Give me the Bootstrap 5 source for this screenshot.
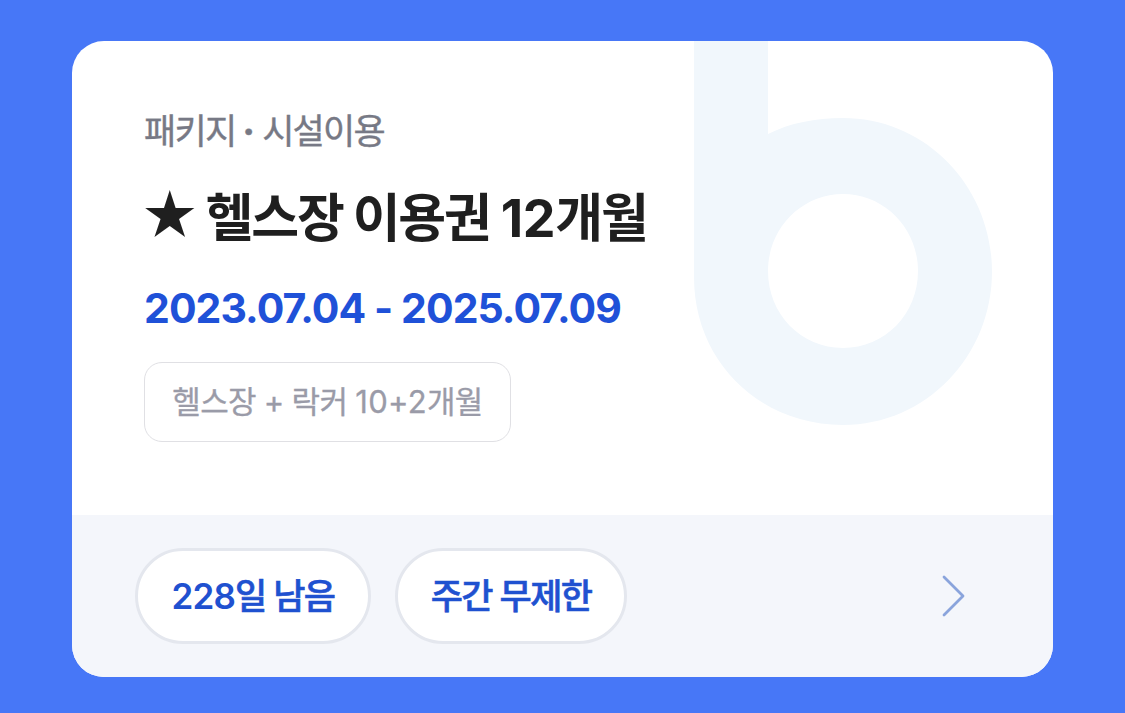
<!DOCTYPE html>
<html lang="ko">
<head>
    <meta charset="UTF-8">
    <meta name="viewport" content="width=device-width, initial-scale=1.0">
    <title>헬스장 이용권</title>
    <link href="https://cdn.jsdelivr.net/npm/bootstrap@5.3.5/dist/css/bootstrap.min.css" rel="stylesheet">
    <style>
        body {
            background: #4777f7;
            font-family: Inter, "Noto Sans CJK KR", sans-serif;
            padding: 41px 72px 36px;
            overflow: hidden;
        }
        .pass {
            height: 636px;
            border-radius: 32px;
        }
        .pass-body {
            height: 474px;
            padding: 65px 72px 0;
        }
        .pass-logo {
            top: 0;
            left: 622px;
        }
        .pass-type {
            font-size: 35px;
            line-height: 50px;
            letter-spacing: -1.75px;
            color: #777985;
            -webkit-text-stroke: .4px;
        }
        .type-dot {
            font-weight: 800;
            margin: 0 1px 0 -1px;
        }
        .pass-title {
            font-size: 52px;
            line-height: 76px;
            letter-spacing: -2.2px;
            margin-top: 25px;
            color: #1f1f1f;
        }
        .title-star {
            font-size: 57px;
            line-height: 1;
            letter-spacing: 0;
            margin: 0 -4px 0 -4px;
        }
        .title-num {
            letter-spacing: -.3px;
            margin-left: 1px;
        }
        .pass-date {
            font-size: 41px;
            line-height: 60px;
            letter-spacing: -.95px;
            margin-top: 21px;
            color: #1f51d8;
        }
        .pass-option {
            width: 367px;
            height: 80px;
            margin-top: 24px;
            border: 1px solid #e0e0e4;
            border-radius: 18px;
            font-size: 31px;
            letter-spacing: -.7px;
            padding-top: 1px;
            color: #9a9ba8;
            -webkit-text-stroke: .3px;
        }
        .option-num { letter-spacing: .3px; }
        .pass-footer {
            height: 162px;
            padding: 0 88px 0 63px;
            background: #f4f6fb;
        }
        .pass-pill {
            height: 96px;
            border: 3px solid #e4e7ee;
            font-size: 35px;
            letter-spacing: -1.6px;
            color: #1f51d0;
            -webkit-text-stroke: .6px;
        }
        .pill-days { width: 236px; }
        .pill-week { width: 232px; }
        .pill-num {
            letter-spacing: -.9px;
            -webkit-text-stroke: 0;
        }
    </style>
</head>
<body>

    <div class="pass bg-white position-relative overflow-hidden text-nowrap">
        <svg class="pass-logo position-absolute" width="300" height="386" viewBox="0 0 300 386" aria-hidden="true">
            <path fill="#f1f7fc" fill-rule="evenodd" d="M0 0H74V93C96 82 121 77 149 77C232 77 298 146 298 230.500C298 315 232 384 149 384C66 384 0 321 0 236ZM149 153C107 153 74 188 74 230C74 273 107 307 149 307C191 307 224 273 224 230C224 188 191 153 149 153Z"/>
        </svg>

        <div class="pass-body position-relative">
            <div class="pass-type">패키지 <span class="type-dot">·</span> 시설이용</div>
            <h1 class="pass-title fw-bold mb-0"><span class="title-star">★</span> 헬스장 이용권 <span class="title-num">12</span>개월</h1>
            <div class="pass-date fw-bold">2023.07.04 - 2025.07.09</div>
            <div class="pass-option d-flex align-items-center justify-content-center"><div>헬스장 + 락커 <span class="option-num">10+2</span>개월</div></div>
        </div>

        <div class="pass-footer d-flex align-items-center">
            <div class="pass-pill pill-days rounded-pill bg-white fw-medium d-flex align-items-center justify-content-center"><div><span class="pill-num fw-semibold">228</span>일 남음</div></div>
            <div class="pass-pill pill-week rounded-pill bg-white fw-medium d-flex align-items-center justify-content-center ms-4">주간 무제한</div>
            <svg class="ms-auto" width="23" height="42" viewBox="0 0 23 42" fill="none" stroke="#8aa4dc" stroke-width="2.800" stroke-linecap="round" stroke-linejoin="round">
                <path d="M2 2L21 21L2 40"/>
            </svg>
        </div>
    </div>

    <script src="https://cdn.jsdelivr.net/npm/bootstrap@5.3.5/dist/js/bootstrap.bundle.min.js"></script>
</body>
</html>
